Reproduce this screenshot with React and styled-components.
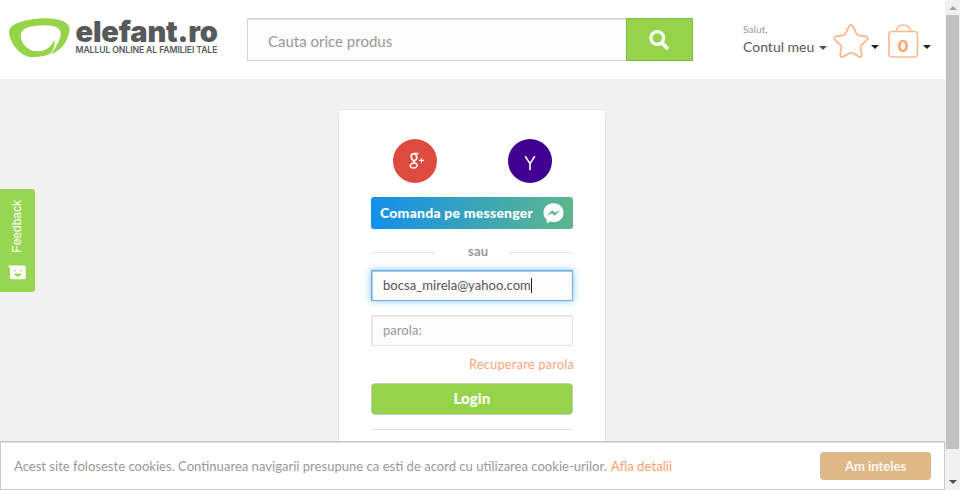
import React from 'react';
import styled, { createGlobalStyle } from 'styled-components';

const GlobalStyle = createGlobalStyle`
  * { box-sizing: border-box; }
  html, body { margin: 0; padding: 0; overflow: hidden; }
  body { font-family: "Noto Sans", "Open Sans", sans-serif; background: #f1f1f1; }
  button, input { font: inherit; margin: 0; }
`;

const Window = styled.div`
  display: grid;
  grid-template-columns: 945px 15px;
  width: 960px;
  height: 490px;
  overflow: hidden;
`;

const Page = styled.div`
  position: relative;
  display: grid;
  grid-template-rows: 79px minmax(0, 1fr) 49px;
  height: 490px;
  background: #f1f1f1;
`;

const Header = styled.header`
  display: flex;
  align-items: flex-start;
  background: #fff;
`;

const Text = styled.span`
  display: block;
  white-space: nowrap;
  font-family: ${(p) => p.$font || 'Lato'}, sans-serif;
  font-size: ${(p) => p.$size}px;
  line-height: ${(p) => p.$line}px;
  font-weight: ${(p) => p.$weight || 400};
  letter-spacing: ${(p) => p.$spacing || 0}px;
  color: ${(p) => p.$color};
`;

const Logo = styled.div`
  display: flex;
  width: 239px;
  padding: 18px 0 0 9px;
`;

const LogoWords = styled.div`
  display: grid;
  align-content: start;
  padding: 0 0 0 5.5px;
`;

const SearchForm = styled.div`
  display: flex;
  width: 446px;
  height: 43px;
  margin: 18px 0 0 8px;
`;

const SearchField = styled.div`
  flex: 1;
  padding: 12px 0 0 20px;
  border: 1px solid #d2d2d2;
  border-right: 0;
  box-shadow: inset 0 1px 0 #e2e2e2;
  background: #fcfcfc;
`;

const SearchButton = styled.button`
  width: 67px;
  padding: 0 1px 0 0;
  display: grid;
  place-items: center;
  border: 1px solid #84ba42;
  background: #95d44a;
`;

const Account = styled.div`
  width: 76px;
  margin: 23px 0 0 50px;
`;

const Tools = styled.div`
  display: flex;
  align-items: flex-start;
  padding-top: 24px;
`;

const Caret = styled.i`
  width: 0;
  height: 0;
  margin: ${(p) => p.$margin};
  border: 4px solid transparent;
  border-top-color: ${(p) => p.$color};
  border-bottom: 0;
`;

const Bag = styled.div`
  position: relative;
  width: 31px;
  height: 35px;
  margin-left: 9px;
`;

const BagCount = styled.div`
  position: absolute;
  inset: 12px 1px auto 0;
  display: grid;
  justify-items: center;
`;

const Main = styled.main`
  display: flex;
  justify-content: center;
  padding-top: 30px;
  overflow: hidden;
`;

const Card = styled.section`
  width: 268px;
  height: 360px;
  margin-right: 1px;
  padding: 29px 32px 0;
  border: 1px solid #e6e6e6;
  border-radius: 4px;
  background: #fff;
`;

const SocialRow = styled.div`
  display: flex;
  justify-content: space-between;
  padding: 0 21px 0 22px;
  height: 44px;
`;

const SocialButton = styled.div`
  display: grid;
  place-items: center;
  width: 44px;
  height: 44px;
  padding: ${(p) => p.$inset || 0};
  border-radius: 50%;
  background: ${(p) => p.$fill};
`;

const MessengerButton = styled.div`
  display: flex;
  align-items: center;
  justify-content: space-between;
  height: 32px;
  margin-top: 14px;
  padding: 0 9px;
  border-radius: 3px;
  background: linear-gradient(90deg, #148fec, #5db78b);
`;

const Divider = styled.div`
  display: grid;
  grid-template-columns: 64px 1fr 64px;
  align-items: center;
  height: 20px;
  margin-top: 13px;
`;

const DividerLabel = styled.div`
  padding: 0 0 2px 33px;
`;

const Rule = styled.div`
  width: 100%;
  height: 1px;
  margin-top: ${(p) => p.$top || 0}px;
  background: #e3e3e3;
`;

const Field = styled.div`
  display: flex;
  align-items: center;
  height: 31px;
  margin-top: ${(p) => p.$top}px;
  padding: 0 0 2px 11px;
  background: #fcfcfc;
  border: 1px solid ${(p) => (p.$focused ? '#66afe9' : '#e3e3e3')};
  box-shadow: ${(p) =>
    p.$focused
      ? 'inset 1px 1px 0 #a9d0f0, 0 0 7px rgba(102, 175, 233, 0.75)'
      : 'inset 1px 1px 0 #ebebeb'};
`;

const TypingCursor = styled.i`
  width: 1px;
  height: 15px;
  margin-top: 2px;
  background: #222;
`;

const Recover = styled.div`
  display: flex;
  justify-content: flex-end;
  height: 18px;
  margin: 9px -1px 0 0;
`;

const LoginButton = styled.div`
  display: grid;
  place-items: center;
  height: 32px;
  margin-top: 10px;
  padding-bottom: 2px;
  border: 1px solid #c3ccbb;
  border-radius: 4px;
  background: #95d44a;
`;

const Feedback = styled.aside`
  position: absolute;
  left: 0;
  top: 189px;
  width: 35px;
  height: 103px;
  display: flex;
  flex-direction: column;
  align-items: center;
  justify-content: space-between;
  padding: 11px 1px 12px 0;
  border-radius: 0 3px 3px 0;
  background: #97d650;
`;

const Vertical = styled.div`
  writing-mode: vertical-rl;
  transform: rotate(180deg);
`;

const CookieBar = styled.footer`
  display: flex;
  align-items: center;
  justify-content: space-between;
  padding: 0 13px 0 13px;
  border: 1px solid #c9c9c9;
  box-shadow: inset 0 1px 0 #dedede;
  background: #fff;
`;

const CookieText = styled.div`
  display: flex;
  gap: 4px;
`;

const AcceptButton = styled.div`
  display: grid;
  place-items: center;
  width: 111px;
  height: 28px;
  border-radius: 4px;
  background: #deb887;
`;

const ScrollTrack = styled.div`
  display: grid;
  grid-template-rows: 15px 434px 1fr;
  justify-items: center;
  background: #f1f1f1;
`;

const ScrollThumb = styled.div`
  width: 13px;
  background: #c1c1c1;
`;

const Arrow = styled.i`
  align-self: ${(p) => (p.$up ? 'center' : 'end')};
  width: 0;
  height: 0;
  margin-bottom: ${(p) => (p.$up ? 0 : 6)}px;
  border: 4px solid transparent;
  ${(p) =>
    p.$up
      ? 'border-top: 0; border-bottom-color: #a3a3a3;'
      : 'border-bottom: 0; border-top-color: #505050;'}
`;

function ElefantMark() {
  return (
    <svg width="61" height="40" viewBox="0 0 61 40">
      <path
        fill="#95d44a"
        fillRule="evenodd"
        d="M37 .2C25 -.3 7 3.5 2 9C-1 12.5 0 18 2 22C5 29 10 34 15 37C20 40 28 39.3 34 38C36.5 37.6 38.5 37 40.3 36.2C44.5 32.5 46.3 28 45.3 22C42 29 37 33 29 33.3C21 33.5 15 28.5 12.8 22.5C10.5 16.5 12 12 18.5 9.5C26 6.8 42 6 48 9.5C53.5 13 52 19 49 24.5C47 29 44.5 33 41 36.6C46 34.8 50 32 53 29C58 23 62 13 60 8C57 2.5 48 .6 37 .2Z"
      />
    </svg>
  );
}

function SearchIcon() {
  return (
    <svg width="20" height="20" viewBox="0 0 20 20" fill="none" stroke="#fff">
      <circle cx="8.3" cy="8" r="6.4" strokeWidth="3.2" />
      <path d="M12.8 12.8L17.8 17.8" strokeWidth="3.8" strokeLinecap="round" />
    </svg>
  );
}

function StarIcon() {
  return (
    <svg width="36" height="34" viewBox="0 0 36 34">
      <path
        d="M16 2.3Q18 -.5 20 2.3L23.7 10Q24.3 11.2 25.7 11.4L32.8 12.4Q36 13.3 34 15.8L28.3 21.3Q27.3 22.3 27.6 23.8L28.8 30.5Q29 33.6 26 32.6L19.7 29.2Q18 28.3 16.3 29.2L10 32.6Q7 33.6 7.2 30.5L8.4 23.8Q8.7 22.3 7.7 21.3L2 15.8Q0 13.3 3.2 12.4L10.3 11.4Q11.7 11.2 12.3 10Z"
        fill="none"
        stroke="#fdb588"
        strokeWidth="1.7"
      />
    </svg>
  );
}

function BagIcon() {
  return (
    <svg width="31" height="35" viewBox="0 0 31 35" fill="none" stroke="#fdba92" strokeWidth="1.6">
      <rect x="1" y="7.5" width="28.5" height="25.5" rx="3" />
      <path d="M8 7.5C9 3 12 1 15.3 1S22 3 23 7.5" />
    </svg>
  );
}

function GooglePlusIcon() {
  return (
    <svg width="17" height="18" viewBox="0 0 17 18" fill="none" stroke="#fff">
      <ellipse cx="6" cy="5.2" rx="2.7" ry="3.5" strokeWidth="1.7" transform="rotate(-12 6 5.2)" />
      <path d="M6 1.5H10.4M6 8.6C5 9.8 5.8 10.3 7.3 11.1C10.6 12.8 9 16 5.3 16C.8 16 1.2 11.3 6.6 11" strokeWidth="1.5" />
      <path d="M11 8.4H16M13.5 5.9V10.9" strokeWidth="1.1" />
    </svg>
  );
}

function YahooIcon() {
  return (
    <svg width="12" height="16" viewBox="0 0 12 16" fill="none" stroke="#fff">
      <path d="M1.2 1.2L6 8.6L10.8 1.2M6 8.3V15.3" strokeWidth="1.6" />
    </svg>
  );
}

function MessengerIcon() {
  return (
    <svg width="21" height="21" viewBox="0 0 21 21">
      <path fill="#fff" d="M10.5.3C4.8.3.5 4.4.5 9.7C.5 12.5 1.8 15 3.8 16.6L3.7 20.4L7.3 18.6C15 20.6 20.5 15.8 20.5 9.7C20.5 4.4 16.2.3 10.5.3Z" />
      <path fill="#57b492" d="M3.8 12.8L9.1 7.3L12 9.7L17 7.2L11.8 12.7L8.9 10.2Z" />
    </svg>
  );
}

function SmileyIcon() {
  return (
    <svg width="18" height="15" viewBox="0 0 18 15">
      <path fill="#fff" d="M0 0.5H16Q17.7.5 17.7 2.2V12.5Q17.7 14.3 16 14.3H3.8Q2 14.3 2 12.5V3.8Z" />
      <path d="M7 4.8V6.2M12.8 4.8V6.2" stroke="#97d650" strokeWidth="1.4" fill="none" />
      <path d="M6 8.6H13.8Q12.8 11.4 9.9 11.4T6 8.6Z" fill="#97d650" />
    </svg>
  );
}

export default function App() {
  return (
    <>
      <GlobalStyle />
      <Window>
        <Page>
          <Header>
            <Logo>
              <ElefantMark />
              <LogoWords>
                <Text $font="Inter" $size={29} $line={28} $weight={900} $spacing={-0.15} $color="#58595b">elefant.ro</Text>
                <Text $font="Inter" $size={8.7} $line={8} $weight={600} $spacing={-0.12} $color="#58595b">
                  MALLUL ONLINE AL FAMILIEI TALE
                </Text>
              </LogoWords>
            </Logo>
            <SearchForm>
              <SearchField>
                <Text $size={15} $line={20} $color="#999">Cauta orice produs</Text>
              </SearchField>
              <SearchButton aria-label="Cauta"><SearchIcon /></SearchButton>
            </SearchForm>
            <Account>
              <Text $size={10} $line={13} $spacing={0.1} $color="#999">Salut,</Text>
              <Text $size={14} $line={21} $color="#58595b">Contul meu</Text>
            </Account>
            <Tools>
              <Caret $margin="22px 6px 0 0" $color="#555" />
              <StarIcon />
              <Caret $margin="21px 0 0 2px" $color="#222" />
              <Bag>
                <BagIcon />
                <BagCount>
                  <Text $font="Inter" $size={16.5} $line={20} $weight={700} $color="#fba46b">0</Text>
                </BagCount>
              </Bag>
              <Caret $margin="21px 0 0 4px" $color="#222" />
            </Tools>
          </Header>
          <Main>
            <Card>
              <SocialRow>
                <SocialButton $fill="#dd4b3e" $inset="0 0 0 2px"><GooglePlusIcon /></SocialButton>
                <SocialButton $fill="#400090" $inset="3px 0 0"><YahooIcon /></SocialButton>
              </SocialRow>
              <MessengerButton>
                <Text $size={14} $line={20} $weight={900} $spacing={0.22} $color="#fff">Comanda pe messenger</Text>
                <MessengerIcon />
              </MessengerButton>
              <Divider>
                <Rule />
                <DividerLabel>
                  <Text $size={13} $line={18} $weight={700} $spacing={0.2} $color="#999">sau</Text>
                </DividerLabel>
                <Rule />
              </Divider>
              <Field $top={8} $focused>
                <Text $size={13} $line={20} $spacing={0.05} $color="#555">bocsa_mirela@yahoo.com</Text>
                <TypingCursor />
              </Field>
              <Field $top={14}>
                <Text $size={13} $line={20} $spacing={0.05} $color="#999">parola:</Text>
              </Field>
              <Recover>
                <Text $size={13} $line={18} $spacing={0.12} $color="#fba67a">Recuperare parola</Text>
              </Recover>
              <LoginButton>
                <Text $size={15} $line={20} $weight={900} $spacing={0.1} $color="#fff">Login</Text>
              </LoginButton>
              <Rule $top={14} />
            </Card>
          </Main>
          <CookieBar>
            <CookieText>
              <Text $size={13.07} $line={20} $color="#999">
                Acest site foloseste cookies. Continuarea navigarii presupune ca esti de acord cu utilizarea cookie-urilor.
              </Text>
              <Text $size={13.2} $line={20} $color="#fba26d">Afla detalii</Text>
            </CookieText>
            <AcceptButton>
              <Text $size={13} $line={20} $weight={700} $color="#fff8ee">Am inteles</Text>
            </AcceptButton>
          </CookieBar>
          <Feedback>
            <Vertical>
              <Text $font="'Liberation Sans'" $size={12} $line={15} $color="#fff">Feedback</Text>
            </Vertical>
            <SmileyIcon />
          </Feedback>
        </Page>
        <ScrollTrack>
          <Arrow $up />
          <ScrollThumb />
          <Arrow />
        </ScrollTrack>
      </Window>
    </>
  );
}
